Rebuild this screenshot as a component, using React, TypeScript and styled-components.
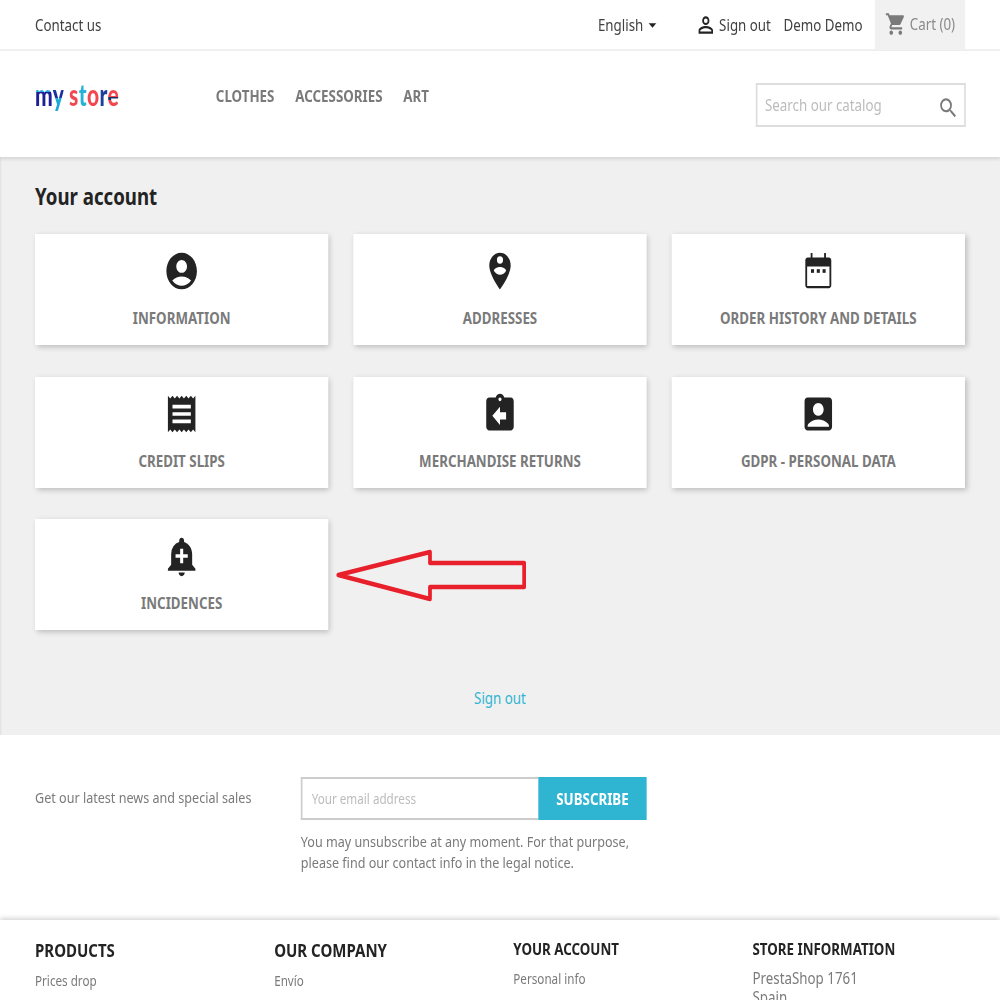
import React from "react";
import styled, { createGlobalStyle } from "styled-components";
import {
  MdAccountBox,
  MdAccountCircle,
  MdAddAlert,
  MdArrowDropDown,
  MdAssignmentReturn,
  MdPersonOutline,
  MdPersonPinCircle,
  MdReceipt,
  MdSearch,
  MdShoppingCart,
} from "react-icons/md";

const GlobalStyle = createGlobalStyle`
  html, body {
    margin: 0;
    padding: 0;
    background: #fff;
  }
  * {
    box-sizing: border-box;
  }
`;

const Viewport = styled.div`
  width: 1000px;
  height: 1000px;
  overflow: hidden;
`;

// the shot is a 1200px wide page squeezed to 1000px, icons included
const Page = styled.div`
  width: 1200px;
  transform: scaleX(0.8333);
  transform-origin: 0 0;
  font-family: "Noto Sans", "Open Sans", sans-serif;
  font-size: 16px;
  color: #7a7a7a;
`;

const TopBar = styled.div`
  height: 51px;
  display: flex;
  align-items: center;
  justify-content: space-between;
  padding: 0 42px;
  border-bottom: 2px solid #f1f1f1;
  color: #414141;
`;

const TopRight = styled.div`
  display: flex;
  align-items: center;
  height: 100%;
`;

const Language = styled.div`
  display: flex;
  align-items: center;
  margin-right: 40px;
`;

const TopLink = styled.span`
  display: flex;
  align-items: center;
  gap: 3px;
  margin-right: 15px;
`;

const Cart = styled.div`
  width: 108px;
  height: 49px;
  background: #f1f1f1;
  color: #8a8a8a;
  display: flex;
  align-items: center;
  justify-content: center;
  gap: 4px;
  padding-bottom: 1px;
`;

const Header = styled.header`
  height: 106px;
  display: flex;
  align-items: flex-start;
  padding: 0 41px 0 42px;
  position: relative;
  z-index: 1;
  box-shadow: 0 2px 4px rgba(0, 0, 0, 0.12);
  background: #fff;
`;

const Logo = styled.div`
  width: 217px;
  padding-top: 20px;
  font-family: "Lato", "Noto Sans", sans-serif;
  font-size: 30px;
  font-weight: 900;
  line-height: 46px;
  letter-spacing: 0.5px;
`;

const LogoWord = styled.span`
  display: inline-block;
  transform: scaleX(0.84);
  transform-origin: 0 50%;
`;

const LogoLetter = styled.span<{ $paint: string }>`
  background: ${(p) => p.$paint};
  -webkit-background-clip: text;
  background-clip: text;
  color: transparent;
`;

const Nav = styled.nav`
  display: flex;
  gap: 25px;
  padding-top: 33px;
  flex: 1;
`;

const NavItem = styled.span`
  font-weight: 700;
  color: #7a7a7a;
  line-height: 24px;
`;

const SearchBox = styled.div`
  width: 252px;
  height: 44px;
  margin-top: 32px;
  border: 2px solid #ddd;
  display: flex;
  align-items: center;
  justify-content: space-between;
  padding: 0 8px 0 9px;
  color: #bcbcbc;
`;

const SearchIcon = styled(MdSearch)`
  margin: 6px -2px 0 0;
`;

const Main = styled.main`
  height: 578px;
  background: #f0f0f0;
  padding: 26px 42px 0;
  position: relative;
  box-shadow: inset 2px 0 2px -1px rgba(0, 0, 0, 0.08);
`;

const Title = styled.h1`
  margin: 0 0 23px;
  font-size: 22.4px;
  line-height: 28px;
  font-weight: 700;
  color: #232323;
`;

const CardGrid = styled.div`
  display: grid;
  grid-template-columns: repeat(3, 1fr);
  grid-auto-rows: 111px;
  gap: 31.5px 30px;
`;

const Card = styled.div`
  background: #fff;
  box-shadow: 2px 2px 6px rgba(0, 0, 0, 0.22);
  display: flex;
  flex-direction: column;
  align-items: center;
  padding-top: 15px;
  color: #232323;
`;

const CardLabel = styled.span`
  margin-top: 13px;
  font-weight: 700;
  line-height: 24px;
  color: #7a7a7a;
  text-transform: uppercase;
`;

const Arrow = styled.svg`
  position: absolute;
  left: 400px;
  top: 389px;
`;

const SignOut = styled.div`
  margin-top: 55.5px;
  text-align: center;
  color: #2fb5d2;
  line-height: 24px;
`;

const Newsletter = styled.section`
  height: 185px;
  padding: 42px 42px 0;
  display: flex;
  align-items: flex-start;
`;

const NewsLabel = styled.div`
  width: 319px;
  padding-top: 8px;
  font-size: 15.1px;
  line-height: 24px;
`;

const NewsForm = styled.div`
  width: 415px;
`;

const NewsRow = styled.div`
  display: flex;
  height: 43px;
`;

const EmailInput = styled.div`
  flex: 1;
  border: 2px solid #ccc;
  border-right: none;
  color: #bcbcbc;
  font-size: 14px;
  display: flex;
  align-items: center;
  padding-left: 11px;
`;

const Subscribe = styled.div`
  width: 130px;
  background: #2fb5d2;
  color: #fff;
  font-weight: 700;
  display: flex;
  align-items: center;
  justify-content: center;
`;

const NewsNote = styled.p`
  margin: 11px 0 0;
  font-size: 15.1px;
  line-height: 21px;
`;

const Footer = styled.footer`
  height: 80px;
  padding: 18px 42px 0;
  display: grid;
  grid-template-columns: repeat(4, 287px);
  position: relative;
  box-shadow: 0 -2px 5px rgba(0, 0, 0, 0.16);
`;

const FooterColumn = styled.div<{ $lift: number }>`
  margin-top: ${(p) => -p.$lift}px;
`;

const FooterTitle = styled.div<{ $small?: boolean }>`
  font-weight: 700;
  font-size: ${(p) => (p.$small ? 16 : 18)}px;
  line-height: 24px;
  color: #232323;
  text-transform: uppercase;
  margin-bottom: ${(p) => (p.$small ? 8 : 9)}px;
`;

const FooterLink = styled.div<{ $large?: boolean }>`
  font-size: ${(p) => (p.$large ? 16 : 14)}px;
  line-height: ${(p) => (p.$large ? 19 : 20)}px;
`;

const CalendarIcon = () => (
  <svg width="44" height="44" viewBox="0 0 24 24" fill="#232323">
    <path
      fillRule="evenodd"
      d="M7 2.2h1.2v2.5h7.6V2.2H17v2.5h1.9c.9 0 1.6.7 1.6 1.6v13.5c0 .9-.7 1.6-1.6 1.6H5.1c-.9 0-1.6-.7-1.6-1.6V6.3c0-.9.7-1.6 1.6-1.6H7V2.2zM4.7 9.6v10.6h14.6V9.6H4.7z"
    />
    <rect x="7.2" y="11" width="2" height="2" />
    <rect x="11" y="11" width="2" height="2" />
    <rect x="14.8" y="11" width="2" height="2" />
  </svg>
);

const cards = [
  { label: "Information", icon: <MdAccountCircle size={44} /> },
  { label: "Addresses", icon: <MdPersonPinCircle size={44} /> },
  { label: "Order history and details", icon: <CalendarIcon /> },
  { label: "Credit slips", icon: <MdReceipt size={44} /> },
  { label: "Merchandise returns", icon: <MdAssignmentReturn size={44} /> },
  { label: "GDPR - Personal data", icon: <MdAccountBox size={44} /> },
  { label: "Incidences", icon: <MdAddAlert size={44} /> },
];

const logo: [string, string][] = [
  ["m", "linear-gradient(180deg, #27a9dc 45%, #1c1f96 45%)"],
  ["y", "linear-gradient(180deg, #1c2f9e 62%, #1fa9d6 62%)"],
  [" ", "#fff"],
  ["s", "#f2474f"],
  ["t", "#27b2d8"],
  ["o", "#f2474f"],
  ["r", "#1c3fa0"],
  ["e", "linear-gradient(180deg, #f2474f 58%, #1c3060 58%, #1c3060 68%, #f2474f 68%)"],
];

const App: React.FC = () => {
  return (
    <Viewport>
      <GlobalStyle />
      <Page>
        <TopBar>
          <span>Contact us</span>
          <TopRight>
            <Language>
              English
              <MdArrowDropDown size={22} color="#232323" />
            </Language>
            <TopLink>
              <MdPersonOutline size={26} color="#232323" />
              Sign out
            </TopLink>
            <TopLink>Demo Demo</TopLink>
            <Cart>
              <MdShoppingCart size={26} color="#7a7a7a" />
              Cart (0)
            </Cart>
          </TopRight>
        </TopBar>
        <Header>
          <Logo>
            <LogoWord>
              {logo.map(([letter, paint], i) => (
                <LogoLetter key={i} $paint={paint}>
                  {letter}
                </LogoLetter>
              ))}
            </LogoWord>
          </Logo>
          <Nav>
            <NavItem>CLOTHES</NavItem>
            <NavItem>ACCESSORIES</NavItem>
            <NavItem>ART</NavItem>
          </Nav>
          <SearchBox>
            Search our catalog
            <SearchIcon size={26} color="#7a7a7a" />
          </SearchBox>
        </Header>
        <Main>
          <Title>Your account</Title>
          <CardGrid>
            {cards.map((card) => (
              <Card key={card.label}>
                {card.icon}
                <CardLabel>{card.label}</CardLabel>
              </Card>
            ))}
          </CardGrid>
          <Arrow width="240" height="60" viewBox="0 0 240 60">
            <path
              d="M6 29 L116 6 V17 H229 V41 H116 V53 Z"
              fill="none"
              stroke="#e8202c"
              strokeWidth="4.5"
              strokeLinejoin="round"
            />
          </Arrow>
          <SignOut>Sign out</SignOut>
        </Main>
        <Newsletter>
          <NewsLabel>Get our latest news and special sales</NewsLabel>
          <NewsForm>
            <NewsRow>
              <EmailInput>Your email address</EmailInput>
              <Subscribe>SUBSCRIBE</Subscribe>
            </NewsRow>
            <NewsNote>
              You may unsubscribe at any moment. For that purpose,
              <br />
              please find our contact info in the legal notice.
            </NewsNote>
          </NewsForm>
        </Newsletter>
        <Footer>
          <FooterColumn $lift={0}>
            <FooterTitle>Products</FooterTitle>
            <FooterLink>Prices drop</FooterLink>
          </FooterColumn>
          <FooterColumn $lift={0}>
            <FooterTitle>Our company</FooterTitle>
            <FooterLink>Envío</FooterLink>
          </FooterColumn>
          <FooterColumn $lift={1}>
            <FooterTitle $small>Your account</FooterTitle>
            <FooterLink>Personal info</FooterLink>
          </FooterColumn>
          <FooterColumn $lift={1}>
            <FooterTitle $small>Store information</FooterTitle>
            <FooterLink $large>PrestaShop 1761</FooterLink>
            <FooterLink $large>Spain</FooterLink>
          </FooterColumn>
        </Footer>
      </Page>
    </Viewport>
  );
};

export default App;
